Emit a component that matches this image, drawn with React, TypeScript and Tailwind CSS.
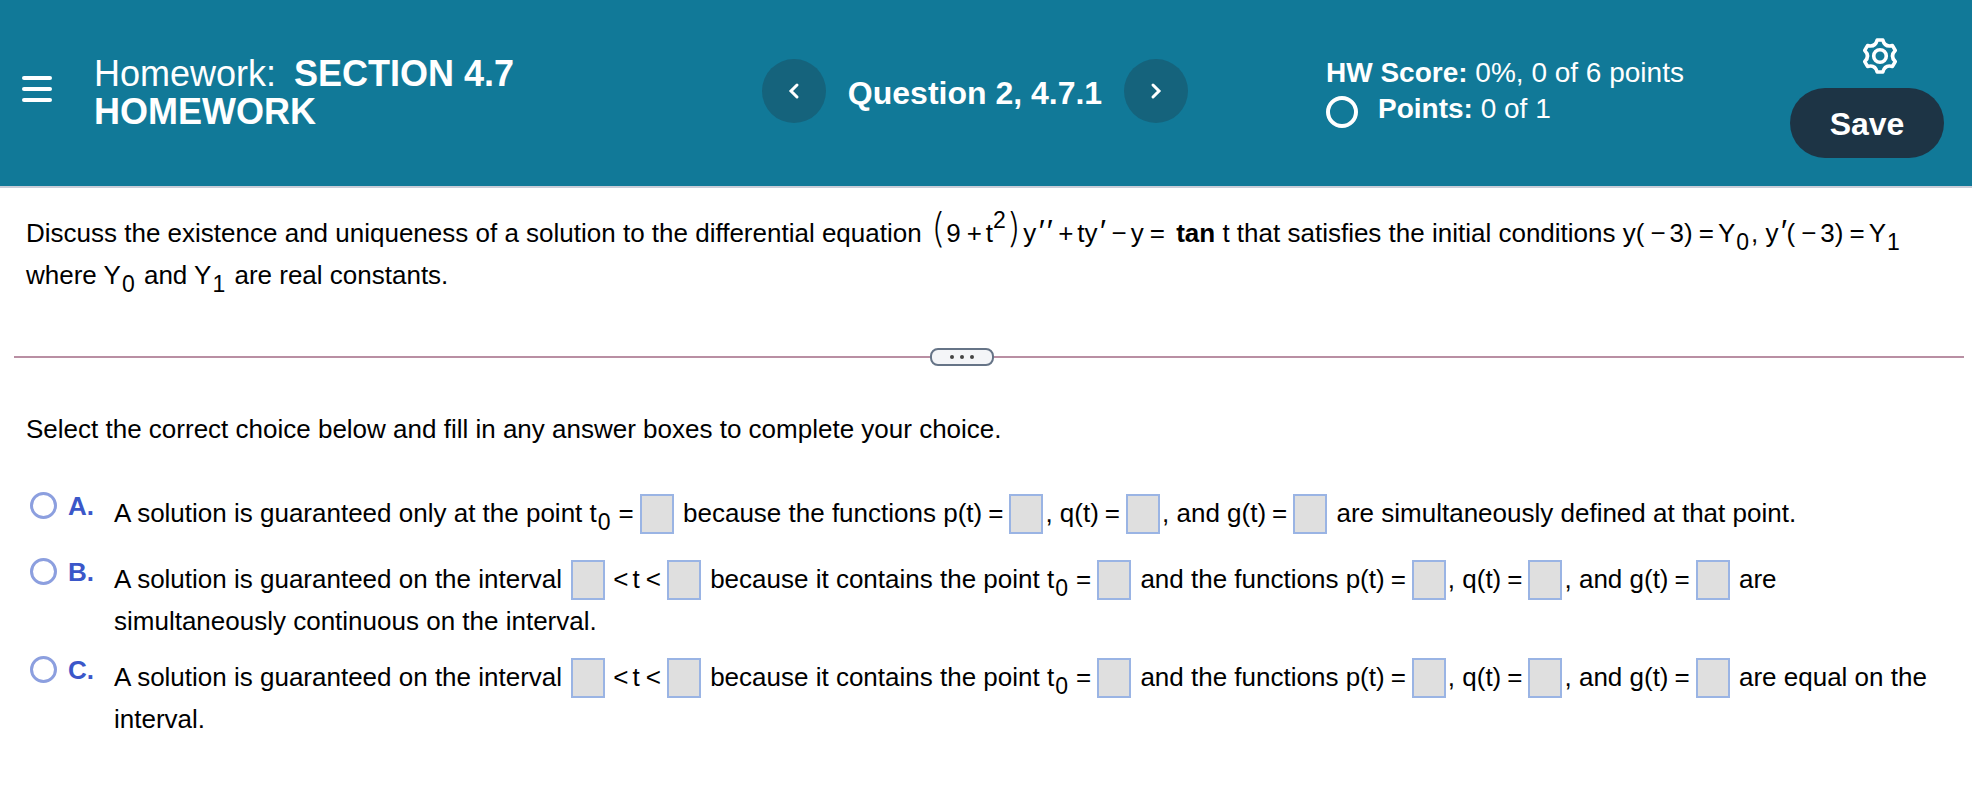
import React, {useState} from 'react';

const Blank = ({ label }: { label: string }) => {
    const [value, setValue] = useState('');

    return (
        <input
            type="text"
            aria-label={label}
            className="inline-block w-[34px] h-10 mx-0.5 -mt-0.5 border-2 border-[#9ab4e4] bg-[#dfdfdf] text-center align-middle"
            value={value}
            onChange={(e) => setValue(e.target.value)}
        />
    );
};

const Sub = ({ children }: { children: React.ReactNode }) => (
    <span className="inline-block relative top-2 ml-px mr-0.5 text-[23px] leading-none">{children}</span>
);

const Sup = ({ children }: { children: React.ReactNode }) => (
    <span className="inline-block relative -top-3.5 text-[23px] leading-none">{children}</span>
);

const Op = ({ children }: { children: React.ReactNode }) => (
    <span className="ml-1.5 mr-1">{children}</span>
);

const Prime = () => <span className="mx-px text-[32px] leading-none italic">′</span>;

const Paren = ({ children }: { children: React.ReactNode }) => (
    <span className="mx-0.5 font-['Inter','Liberation_Sans',sans-serif] font-extralight text-[40px] leading-none">{children}</span>
);

// p(t) = [], q(t) = [], and g(t) = []
const Functions = () => (
    <>
        p(t)<Op>=</Op><Blank label="p(t)"/>, q(t)<Op>=</Op><Blank label="q(t)"/>, and g(t)<Op>=</Op><Blank label="g(t)"/>
    </>
);

const Interval = () => (
    <>
        A solution is guaranteed on the interval <Blank label="lower bound"/><Op>&lt;</Op>t<Op>&lt;</Op><Blank label="upper bound"/>{' '}
        because it contains the point t<Sub>0</Sub><Op>=</Op><Blank label="t0"/> and the functions <Functions/>{' '}
    </>
);

const choices = [
    {
        id: 'A',
        body: (
            <>
                A solution is guaranteed only at the point t<Sub>0</Sub><Op>=</Op><Blank label="t0"/>{' '}
                because the functions <Functions/> are simultaneously defined at that point.
            </>
        ),
    },
    { id: 'B', body: <><Interval/>are simultaneously continuous on the interval.</> },
    { id: 'C', body: <><Interval/>are equal on the interval.</> },
];

const Header = () => (
    <header className="grid grid-cols-[762fr_564fr_464fr_182fr] h-[188px] bg-[#117998] border-b-2 border-[#c9cdd8] text-white">
        <div className="flex items-start pl-[22px]">
            <button type="button" aria-label="Menu" className="mt-[76px] flex flex-col gap-[7px]">
                <span className="block w-[30px] h-1 rounded-full bg-white"/>
                <span className="block w-[30px] h-1 rounded-full bg-white"/>
                <span className="block w-[30px] h-1 rounded-full bg-white"/>
            </button>
            <h1 className="mt-[55px] ml-[42px] max-w-[460px] text-4xl leading-[38px]">
                Homework: <b className="ml-2">SECTION 4.7 HOMEWORK</b>
            </h1>
        </div>

        <nav className="flex items-start pt-[59px]">
            <button type="button" aria-label="Previous question" className="flex items-center justify-center size-16 rounded-full bg-[#15637c]">
                <svg width="12" height="18" viewBox="0 0 12 18" fill="none" stroke="currentColor" strokeWidth="3" strokeLinecap="round">
                    <path d="M9 3 3 9l6 6"/>
                </svg>
            </button>
            <h2 className="mx-5 mt-3.5 w-[258px] text-center text-[32px] leading-10 font-bold">Question 2, 4.7.1</h2>
            <button type="button" aria-label="Next question" className="flex items-center justify-center size-16 rounded-full bg-[#15637c]">
                <svg width="12" height="18" viewBox="0 0 12 18" fill="none" stroke="currentColor" strokeWidth="3" strokeLinecap="round">
                    <path d="m3 3 6 6-6 6"/>
                </svg>
            </button>
        </nav>

        <div className="mt-[55px] text-[28px] leading-9">
            <p><b>HW Score:</b> 0%, 0 of 6 points</p>
            <div className="flex">
                <span className="mt-[5px] mr-5 size-8 rounded-full border-4 border-white"/>
                <p><b>Points:</b> 0 of 1</p>
            </div>
        </div>

        <div className="flex flex-col items-end pt-[37px] pr-7">
            <button type="button" aria-label="Settings" className="mr-[46px]">
                <svg width="36" height="38" viewBox="-18 -19 36 38" fill="none" stroke="currentColor" strokeWidth="3.6" strokeLinejoin="round">
                    <path d="M-2.8-16H2.8C4.2-10.8 7.25-9.04 12.46-10.42L15.26-5.58C11.45-1.76 11.45 1.76 15.26 5.58L12.46 10.42C7.25 9.04 4.2 10.8 2.8 16H-2.8C-4.2 10.8-7.25 9.04-12.46 10.42L-15.26 5.58C-11.45 1.76-11.45-1.76-15.26-5.58L-12.46-10.42C-7.25-9.04-4.2-10.8-2.8-16Z"/>
                    <circle r="6.3"/>
                </svg>
            </button>
            <button type="button" className="mt-[13px] w-[154px] h-[70px] pt-0.5 rounded-full bg-[#1d3445] text-[32px] font-bold">
                Save
            </button>
        </div>
    </header>
);

const App = () => {
    const [choice, setChoice] = useState('');

    return (
        <div className="min-h-screen bg-white text-black font-['Liberation_Sans',Arial,sans-serif]">
            <Header/>

            <main className="text-[26px] leading-[42px]">
                <p className="mt-5 px-[26px]">
                    Discuss the existence and uniqueness of a solution to the differential equation{' '}
                    <Paren>(</Paren>9<Op>+</Op>t<Sup>2</Sup><Paren>)</Paren>y<Prime/><Prime/><Op>+</Op>ty<Prime/><Op>−</Op>y<Op>=</Op>{' '}
                    <b>tan</b> t that satisfies the initial conditions y(<Op>−</Op>3)<Op>=</Op>Y<Sub>0</Sub>, y<Prime/>(<Op>−</Op>3)<Op>=</Op>Y<Sub>1</Sub>{' '}
                    where Y<Sub>0</Sub> and Y<Sub>1</Sub> are real constants.
                </p>

                <div className="mt-[52px] ml-[14px] mr-2 flex items-center">
                    <span className="h-0.5 w-[916px] bg-[#b98fa3]"/>
                    <button type="button" aria-label="Resize panels" className="flex items-center justify-center gap-1.5 w-16 h-[18px] rounded-lg border-2 border-[#667487] bg-[#f4f5f8]">
                        <span className="size-1 rounded-full bg-[#444]"/>
                        <span className="size-1 rounded-full bg-[#444]"/>
                        <span className="size-1 rounded-full bg-[#444]"/>
                    </button>
                    <span className="h-0.5 grow bg-[#b98fa3]"/>
                </div>

                <p className="mt-[42px] px-[26px]">
                    Select the correct choice below and fill in any answer boxes to complete your choice.
                </p>

                <div className="mt-[42px] flex flex-col gap-3.5 pl-[30px] pr-8">
                    {choices.map((c) => (
                        <div key={c.id} className="flex items-start min-h-[52px]">
                            <input
                                type="radio"
                                id={`choice-${c.id}`}
                                name="choice"
                                className="appearance-none shrink-0 size-[27px] rounded-full border-3 border-[#8c9fdf] bg-white checked:bg-[#3b57c9]"
                                checked={choice === c.id}
                                onChange={() => setChoice(c.id)}
                            />
                            <label htmlFor={`choice-${c.id}`} className="ml-[11px] w-[46px] shrink-0 leading-7 font-bold text-[#3b57c9]">
                                {c.id}.
                            </label>
                            <div>{c.body}</div>
                        </div>
                    ))}
                </div>
            </main>
        </div>
    );
};

export default App;
